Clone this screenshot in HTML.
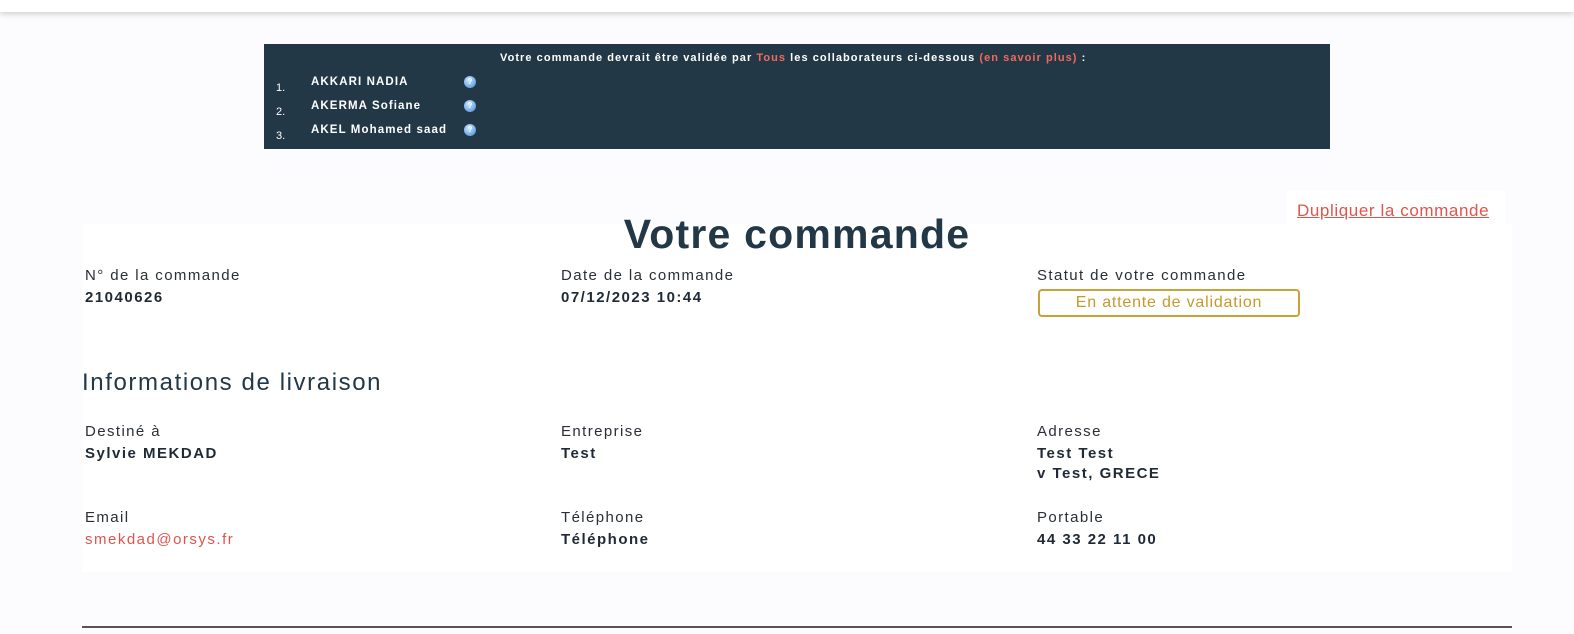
<!DOCTYPE html>
<html style="margin:0;overflow:hidden;width:1574px;height:634px"><head><meta charset="utf-8"><style>
body{margin:0;width:1574px;height:634px;background:#fcfbfd;font-family:"Liberation Sans",sans-serif;position:relative;overflow:hidden;color:#1f2a36}
.top{position:absolute;left:0;top:0;width:1574px;height:12px;background:#fff;box-shadow:0 2px 6px rgba(0,0,0,.18)}
.banner{position:absolute;left:264px;top:44px;width:1066px;height:105px;background:#233847;color:#fff;font-size:11px;font-weight:bold}
.banner .h{position:absolute;left:236px;top:8px;white-space:nowrap;letter-spacing:1.05px}
.r{color:#f06a5c}
.row{position:absolute;left:0;height:20px}
.num{position:absolute;left:12px;font-weight:normal;font-size:11px}
.nm{position:absolute;left:47px;white-space:nowrap;font-size:11.5px;letter-spacing:1.1px}
.q{position:absolute;left:200px;width:12px;height:12px;border-radius:50%;background:radial-gradient(circle at 40% 35%,#cfe8ff,#3b86d8);font-size:8px;line-height:12px;text-align:center;color:#fff}
.panel{position:absolute;left:82px;top:224px;width:1430px;height:348px;background:#fff}
.linkbox{position:absolute;left:1287px;top:191px;width:218px;height:33px;background:#fff}
.linkbox a{position:absolute;left:10px;top:10px;color:#e0544c;font-size:17px;letter-spacing:.6px;text-decoration:underline;white-space:nowrap}
h1{position:absolute;left:0;width:1594px;top:211px;margin:0;text-align:center;font-size:41px;font-weight:bold;color:#233847;letter-spacing:1.2px}
.lbl{position:absolute;font-size:15px;color:#2a2f36;letter-spacing:1.4px;white-space:nowrap}
.val{position:absolute;font-size:15px;font-weight:bold;color:#1f2a36;line-height:20px;letter-spacing:1.5px;white-space:nowrap}
.status{position:absolute;left:1038px;top:289px;width:258px;height:24px;border:2px solid #c9a23b;border-radius:4px;color:#c49a2a;font-size:16px;letter-spacing:.8px;text-align:center;line-height:24px}
h2{position:absolute;left:82px;top:369px;margin:0;font-size:24px;font-weight:normal;color:#233847;letter-spacing:1.6px}
.line{position:absolute;left:82px;top:626px;width:1430px;height:2px;background:#555}
</style></head><body>
<div class="top"></div>
<div class="banner">
<div class="h">Votre commande devrait être validée par <span class="r">Tous</span> les collaborateurs ci-dessous <span class="r">(en savoir plus)</span> :</div>
<div class="row" style="top:32px"><span class="num" style="top:6px">1.</span><span class="nm">AKKARI NADIA</span><span class="q" style="top:0">?</span></div>
<div class="row" style="top:56px"><span class="num" style="top:6px">2.</span><span class="nm">AKERMA Sofiane</span><span class="q" style="top:0">?</span></div>
<div class="row" style="top:80px"><span class="num" style="top:6px">3.</span><span class="nm">AKEL Mohamed saad</span><span class="q" style="top:0">?</span></div>
</div>
<div class="panel"></div>
<div class="linkbox"><a>Dupliquer la commande</a></div>
<h1>Votre commande</h1>
<div class="lbl" style="left:85px;top:267px">N° de la commande</div>
<div class="val" style="left:85px;top:288px">21040626</div>
<div class="lbl" style="left:561px;top:267px">Date de la commande</div>
<div class="val" style="left:561px;top:288px">07/12/2023 10:44</div>
<div class="lbl" style="left:1037px;top:267px">Statut de votre commande</div>
<div class="status">En attente de validation</div>
<h2>Informations de livraison</h2>
<div class="lbl" style="left:85px;top:423px">Destiné à</div>
<div class="val" style="left:85px;top:444px">Sylvie MEKDAD</div>
<div class="lbl" style="left:561px;top:423px">Entreprise</div>
<div class="val" style="left:561px;top:444px">Test</div>
<div class="lbl" style="left:1037px;top:423px">Adresse</div>
<div class="val" style="left:1037px;top:444px">Test Test<br>v Test, GRECE</div>
<div class="lbl" style="left:85px;top:509px">Email</div>
<div class="val" style="left:85px;top:530px;color:#e0544c;font-weight:normal">smekdad@orsys.fr</div>
<div class="lbl" style="left:561px;top:509px">Téléphone</div>
<div class="val" style="left:561px;top:530px">Téléphone</div>
<div class="lbl" style="left:1037px;top:509px">Portable</div>
<div class="val" style="left:1037px;top:530px">44 33 22 11 00</div>
<div class="line"></div>
</body></html>
